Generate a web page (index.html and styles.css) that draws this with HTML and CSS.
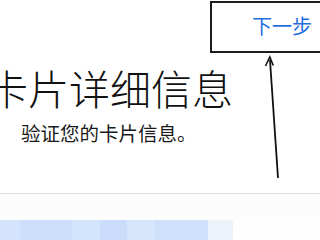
FILE: index.html
```html
<!DOCTYPE html>
<html lang="zh-CN">
<head>
<meta charset="utf-8">
<link rel="stylesheet" href="styles.css">
</head>
<body>
<div class="page">
  <header class="topbar">
    <a class="next">下一步</a>
  </header>
  <section class="intro">
    <h1 class="title">卡片详细信息</h1>
    <p class="subtitle">验证您的卡片信息。</p>
  </section>
  <div class="divider"></div>
  <div class="form">
    <div class="field">
      <span class="seg s1"></span>
      <span class="seg s2"></span>
      <span class="seg s3"></span>
      <span class="seg s4"></span>
      <span class="seg s5"></span>
      <span class="seg s6"></span>
      <span class="seg s7"></span>
    </div>
  </div>
  <div class="annot-box"></div>
  <svg class="annot-arrow" width="320" height="240" viewBox="0 0 320 240">
    <line x1="278" y1="178" x2="270" y2="60" stroke="#111" stroke-width="1.8"/>
    <path d="M265.5 66 L269.8 57 L273.3 65.5" fill="none" stroke="#111" stroke-width="1.6"/>
  </svg>
</div>
</body>
</html>
```

FILE: styles.css
```css
html, body {
  margin: 0;
  padding: 0;
  background: #ffffff;
}
body {
  font-family: "Noto Sans CJK SC", "Noto Sans", sans-serif;
  width: 320px;
  height: 240px;
  overflow: hidden;
}
.page {
  position: relative;
  width: 320px;
  height: 240px;
  overflow: hidden;
  display: flex;
  flex-direction: column;
}
.topbar {
  display: flex;
  justify-content: flex-end;
  height: 54px;
  padding-right: 8px;
  box-sizing: border-box;
}
.next {
  color: #1f6fe0;
  font-size: 20px;
  line-height: 20px;
  margin-top: 16px;
  letter-spacing: 0;
}
.intro {
  display: flex;
  flex-direction: column;
  align-items: flex-start;
  height: 140px;
  box-sizing: border-box;
}
.title {
  margin: 9px 0 0 -13px;
  font-size: 41px;
  line-height: 48px;
  font-weight: 300;
  color: #111;
  letter-spacing: 0;
  white-space: nowrap;
}
.subtitle {
  margin: 10px 0 0 21px;
  font-size: 19.5px;
  line-height: 24px;
  font-weight: 400;
  color: #1a1a1a;
}
.divider {
  height: 1px;
  background: #dcdcdc;
  flex: none;
}
.form {
  flex: 1;
  padding-top: 26px;
  background: linear-gradient(#fbfbfb, #ffffff);
}
.field {
  display: flex;
  height: 20px;
  width: 233px;
}
.seg { height: 100%; }
.s1 { width: 20px; background: #d3e4fc; }
.s2 { width: 52px; background: #cddffb; }
.s3 { width: 28px; background: #d2e3fc; }
.s4 { width: 27px; background: #c9dcfa; }
.s5 { width: 27px; background: #d6e6fc; }
.s6 { width: 54px; background: #cfe0fb; }
.s7 { width: 25px; background: #eef3fb; }
.annot-box {
  position: absolute;
  left: 210px;
  top: 1px;
  width: 120px;
  height: 48px;
  border: 2.5px solid #1c1c1c;
}
.annot-arrow {
  position: absolute;
  left: 0;
  top: 0;
  pointer-events: none;
}
```
